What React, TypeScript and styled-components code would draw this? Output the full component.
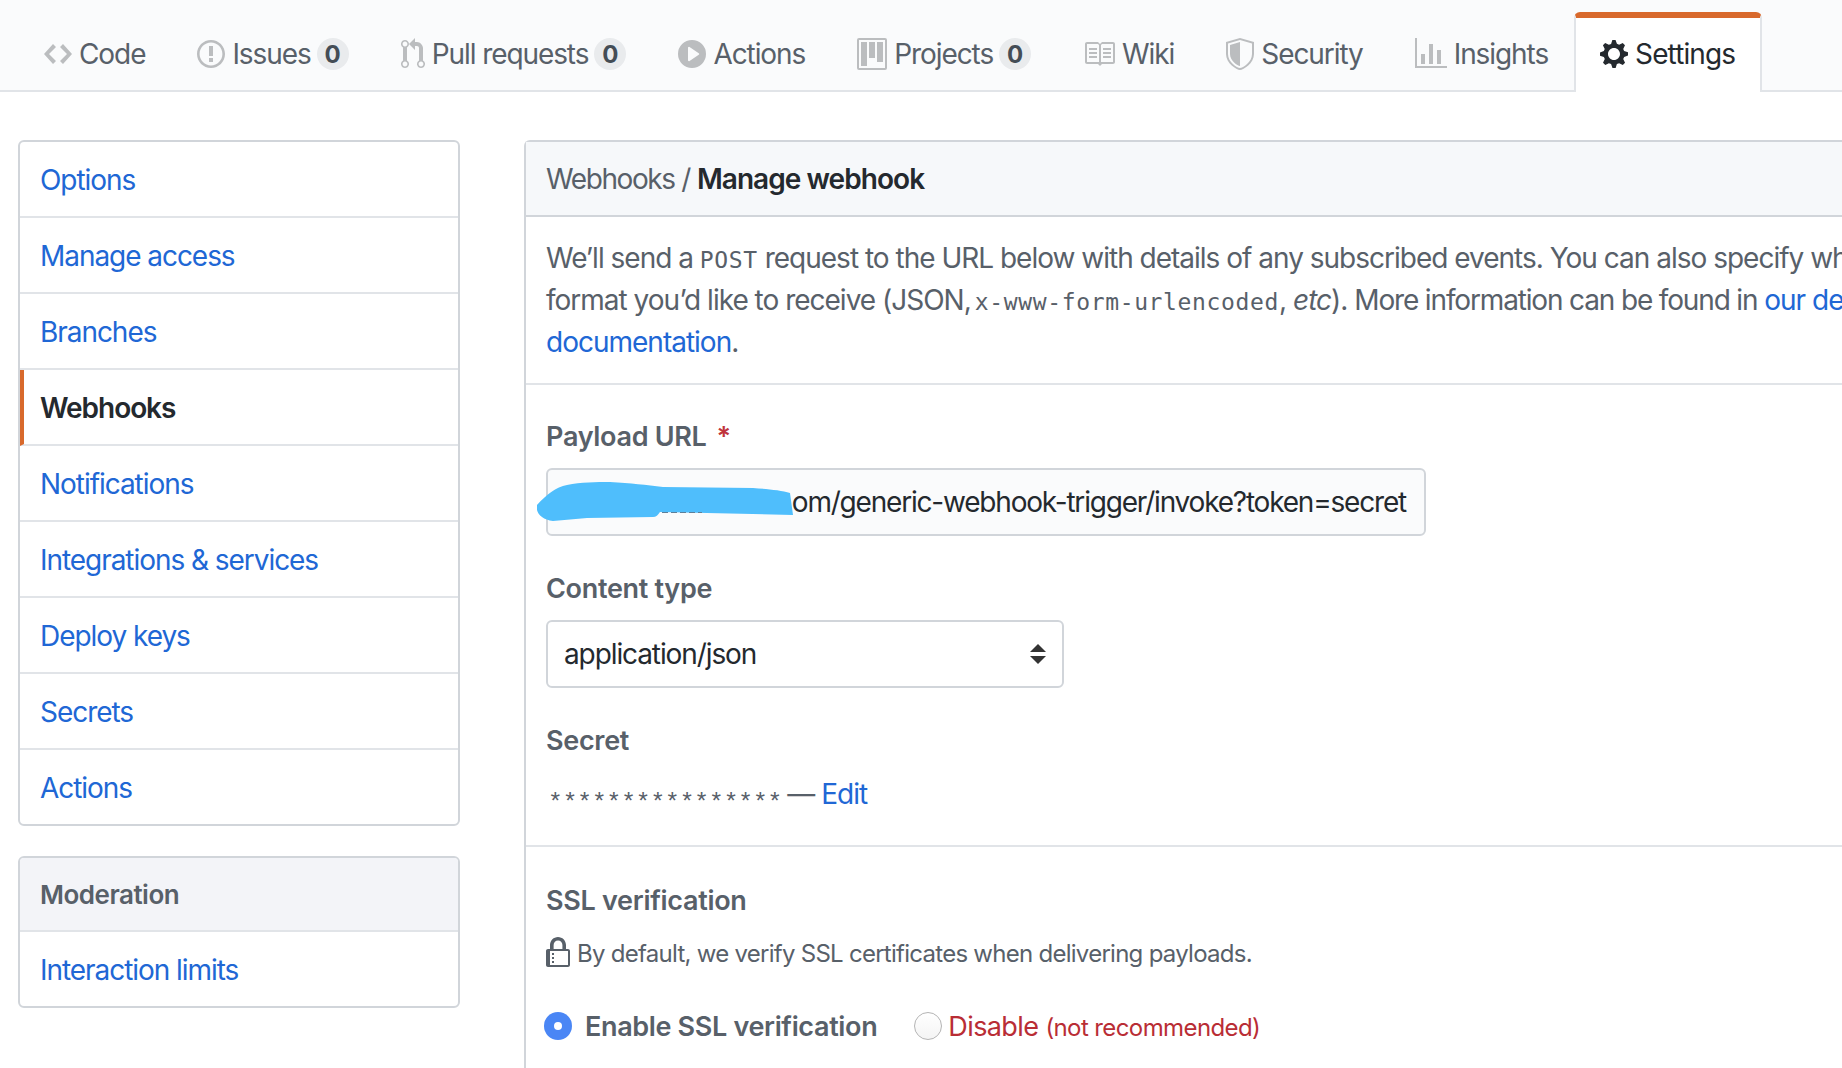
import React from 'react';
import styled, { createGlobalStyle } from 'styled-components';

const GlobalStyle = createGlobalStyle`
  html, body { margin: 0; padding: 0; background: #fff; overflow: hidden; }
  body { font-family: Inter, "Liberation Sans", sans-serif; color: #24292e; }
  * { box-sizing: border-box; }
`;

const Page = styled.div`
  width: 1842px;
  height: 1068px;
  overflow: hidden;
  display: flex;
  flex-direction: column;
`;

const TabBar = styled.nav`
  height: 92px;
  flex: none;
  display: flex;
  align-items: flex-end;
  padding-left: 18px;
  background: #fafbfc;
  border-bottom: 2px solid #e1e4e8;
`;

const Tab = styled.a<{ $active?: boolean }>`
  height: ${p => (p.$active ? '80px' : '78px')};
  margin-bottom: ${p => (p.$active ? '-2px' : '0')};
  display: flex;
  align-items: center;
  gap: 7px;
  padding: 0 ${p => (p.$active ? '25px' : '24px')} ${p => (p.$active ? '2px' : '0')} 24px;
  font-size: 28px;
  letter-spacing: ${p => (p.$active ? '-0.9px' : '-1.08px')};
  white-space: nowrap;
  color: ${p => (p.$active ? '#24292e' : '#586069')};
  background: ${p => (p.$active ? '#fff' : 'transparent')};
  border-left: 2px solid ${p => (p.$active ? '#e1e4e8' : 'transparent')};
  border-right: 2px solid ${p => (p.$active ? '#e1e4e8' : 'transparent')};
  border-top: 6px solid ${p => (p.$active ? '#d8692c' : 'transparent')};
  border-radius: ${p => (p.$active ? '6px 6px 0 0' : '0')};
`;

const TabIcon = styled.svg<{ $active?: boolean }>`
  height: 32px;
  flex: none;
  fill: ${p => (p.$active ? '#24292e' : '#bbbdbf')};
`;

const Badge = styled.span`
  width: 32px;
  height: 32px;
  margin-left: -1px;
  border-radius: 16px;
  background: #e9ebed;
  color: #444d56;
  font-size: 24px;
  font-weight: 700;
  letter-spacing: 0;
  display: flex;
  align-items: center;
  justify-content: center;
`;

const Content = styled.div`
  flex: 1;
  display: flex;
  align-items: flex-start;
  gap: 64px;
  padding: 48px 0 0 18px;
  overflow: hidden;
`;

const Sidebar = styled.aside`
  width: 442px;
  flex: none;
  display: flex;
  flex-direction: column;
  gap: 30px;
`;

const Menu = styled.div`
  border: 2px solid #d1d5da;
  border-radius: 6px;
  overflow: hidden;
  background: #fff;
`;

const MenuItem = styled.a<{ $active?: boolean }>`
  height: 76px;
  display: flex;
  align-items: center;
  padding-left: ${p => (p.$active ? '16px' : '20px')};
  padding-top: 2px;
  font-size: 28px;
  letter-spacing: -1.05px;
  color: ${p => (p.$active ? '#24292e' : '#2067d5')};
  font-weight: ${p => (p.$active ? 600 : 400)};
  border-left: ${p => (p.$active ? '4px solid #d8692c' : '0')};
  border-bottom: 2px solid #e1e4e8;
  &:last-child { border-bottom: 0; height: 74px; }
`;

const MenuHeading = styled.div`
  height: 74px;
  display: flex;
  align-items: center;
  padding-left: 20px;
  font-size: 26px;
  font-weight: 600;
  letter-spacing: -0.5px;
  color: #586069;
  background: #f3f4f8;
  border-bottom: 2px solid #e1e4e8;
`;

const Panel = styled.main`
  width: 1500px;
  flex: none;
  border: 2px solid #d1d5da;
  border-right: 0;
  border-bottom: 0;
  border-radius: 6px 0 0 0;
  min-height: 930px;
`;

const PanelHeader = styled.header`
  height: 75px;
  display: flex;
  align-items: center;
  gap: 7px;
  padding-left: 20px;
  font-size: 28px;
  letter-spacing: -1.4px;
  color: #586069;
  background: #f6f8fa;
  border-bottom: 2px solid #d1d5da;
`;

const Crumb = styled.strong`
  font-weight: 600;
  letter-spacing: -0.95px;
  color: #24292e;
`;

const Intro = styled.section`
  padding: 20px 0 20px 20px;
  font-size: 28px;
  line-height: 42px;
  letter-spacing: -1px;
  color: #586069;
  white-space: nowrap;
  border-bottom: 2px solid #e1e4e8;
`;

const Code = styled.code`
  font-family: "DejaVu Sans Mono", "Liberation Mono", monospace;
  font-size: 23px;
  line-height: 1;
  letter-spacing: 0.65px;
`;

const CodeTucked = styled(Code)`
  margin-left: -3px;
`;

const Tight = styled.span`
  letter-spacing: -1.15px;
`;

const Link = styled.a`
  color: #2067d5;
`;

const FormBlock = styled.section`
  padding: 33px 0 30px 20px;
  border-bottom: 2px solid #e1e4e8;
`;

const Label = styled.label`
  display: block;
  height: 36px;
  line-height: 38px;
  margin-bottom: 14px;
  font-size: 27px;
  font-weight: 600;
  letter-spacing: -0.3px;
  color: #586069;
`;

const Required = styled.span`
  margin-left: 10px;
  color: #c0343c;
`;

const TextField = styled.div`
  position: relative;
  width: 880px;
  height: 68px;
  margin-bottom: 34px;
  padding-right: 18px;
  display: flex;
  align-items: center;
  justify-content: flex-end;
  font-size: 28px;
  letter-spacing: -1.2px;
  color: #24292e;
  background: #fafbfc;
  border: 2px solid #d1d5da;
  border-radius: 6px;
  white-space: nowrap;
`;

const Scribble = styled.svg`
  position: absolute;
  left: -12px;
  top: 12px;
  width: 257px;
  height: 40px;
`;

const SelectField = styled.div`
  width: 518px;
  height: 68px;
  margin-bottom: 34px;
  padding: 0 16px;
  display: flex;
  align-items: center;
  justify-content: space-between;
  font-size: 28px;
  letter-spacing: -1.1px;
  background: #fff;
  border: 2px solid #d1d5da;
  border-radius: 6px;
`;

const SecretRow = styled.div`
  margin-top: 15px;
  height: 42px;
  display: flex;
  align-items: center;
  font-size: 28px;
  letter-spacing: -0.95px;
  color: #586069;
  white-space: pre;
`;

const Stars = styled.span`
  font-family: "Liberation Mono", monospace;
  font-size: 24.4px;
  letter-spacing: 0;
  margin: 19px 5px 0 2px;
`;

const SslBlock = styled.section`
  padding: 35px 0 0 20px;
`;

const Note = styled.p`
  margin: 17px 0 0;
  height: 36px;
  display: flex;
  align-items: center;
  gap: 7px;
  font-size: 24px;
  letter-spacing: -0.73px;
  color: #586069;
  white-space: nowrap;
`;

const Choices = styled.div`
  margin: 37px 0 0 -2px;
  height: 36px;
  display: flex;
  align-items: center;
`;

const Radio = styled.span<{ $on?: boolean }>`
  width: 28px;
  height: 28px;
  flex: none;
  border-radius: 50%;
  display: flex;
  align-items: center;
  justify-content: center;
  background: ${p => (p.$on ? '#4a86f5' : 'linear-gradient(#fff, #f4f4f4)')};
  border: ${p => (p.$on ? '0' : '1.5px solid #b4b4b4')};
  &::after {
    content: '';
    display: ${p => (p.$on ? 'block' : 'none')};
    width: 8px;
    height: 8px;
    border-radius: 50%;
    background: #fff;
  }
`;

const ChoiceText = styled.span<{ $danger?: boolean }>`
  font-size: 27px;
  font-weight: ${p => (p.$danger ? 400 : 600)};
  letter-spacing: ${p => (p.$danger ? '-0.6px' : '-0.35px')};
  color: ${p => (p.$danger ? '#b92d35' : '#586069')};
  margin: ${p => (p.$danger ? '0 0 0 6px' : '0 37px 0 13px')};
  white-space: nowrap;
`;

const Small = styled.span`
  font-size: 24px;
  letter-spacing: -0.6px;
  margin-left: 7px;
`;

const paths = {
  code: 'M9.5 3L8 4.5 11.5 8 8 11.5 9.5 13 14 8 9.5 3zm-5 0L0 8l4.5 5L6 11.5 2.5 8 6 4.5 4.5 3z',
  issue: 'M7 2.3c3.14 0 5.7 2.56 5.7 5.7s-2.56 5.7-5.7 5.7A5.71 5.71 0 0 1 1.3 8c0-3.14 2.56-5.7 5.7-5.7zM7 1C3.14 1 0 4.14 0 8s3.14 7 7 7 7-3.14 7-7-3.14-7-7-7zm1 3H6v5h2V4zm0 6H6v2h2v-2z',
  pull: 'M11 11.28V5c-.03-.78-.34-1.47-.94-2.06C9.46 2.35 8.78 2.03 8 2H7V0L4 3l3 3V4h1c.27.02.48.11.69.31.21.2.3.42.31.69v6.28A1.993 1.993 0 0 0 10 15a1.993 1.993 0 0 0 1-3.72zm-1 2.92c-.66 0-1.2-.55-1.2-1.2 0-.65.55-1.2 1.2-1.2.65 0 1.2.55 1.2 1.2 0 .65-.55 1.2-1.2 1.2zM4 3c0-1.11-.89-2-2-2a1.993 1.993 0 0 0-1 3.72v6.56A1.993 1.993 0 0 0 2 15a1.993 1.993 0 0 0 1-3.72V4.72c.59-.34 1-.98 1-1.72zm-.8 10c0 .66-.55 1.2-1.2 1.2-.65 0-1.2-.55-1.2-1.2 0-.65.55-1.2 1.2-1.2.65 0 1.2.55 1.2 1.2zM2 4.2C1.34 4.2.8 3.65.8 3c0-.65.55-1.2 1.2-1.2.65 0 1.2.55 1.2 1.2 0 .65-.55 1.2-1.2 1.2z',
  play: 'M14 8A7 7 0 1 1 0 8a7 7 0 0 1 14 0zm-8.223 3.482l4.599-3.066a.5.5 0 0 0 0-.832L5.777 4.518A.5.5 0 0 0 5 4.934v6.132a.5.5 0 0 0 .777.416z',
  project: 'M10 12h3V2h-3v10zm-4-2h3V2H6v8zm-4 4h3V2H2v12zm-1 1h13V1H1v14zM14 0H1a1 1 0 0 0-1 1v14a1 1 0 0 0 1 1h13a1 1 0 0 0 1-1V1a1 1 0 0 0-1-1z',
  book: 'M3 5h4v1H3V5zm0 3h4V7H3v1zm0 2h4V9H3v1zm11-5h-4v1h4V5zm0 2h-4v1h4V7zm0 2h-4v1h4V9zm2-6v9c0 .55-.45 1-1 1H9.5l-1 1-1-1H2c-.55 0-1-.45-1-1V3c0-.55.45-1 1-1h5.5l1 1 1-1H15c.55 0 1 .45 1 1zm-8 .5L7.5 3H2v9h6V3.5zm7-.5H9.5l-.5.5V12h6V3z',
  shield: 'M0 2l7-2 7 2v6.02C14 12.69 8.69 16 7 16c-1.69 0-7-3.31-7-7.98V2zm1 .75L7 1l6 1.75v5.268C13 12.104 8.449 15 7 15c-1.449 0-6-2.896-6-6.982V2.75zm1 .75L7 2v12c-1.207 0-5-2.482-5-5.985V3.5z',
  graph: 'M16 14v1H0V0h1v14h15zM5 13H3V8h2v5zm4 0H7V3h2v10zm4 0h-2V6h2v7z',
  gear: 'M14 8.77v-1.6l-1.94-.64-.45-1.09.88-1.84-1.13-1.13-1.81.91-1.09-.45-.69-1.92h-1.6l-.63 1.94-1.11.45-1.84-.88-1.13 1.13.91 1.81-.45 1.09L0 7.23v1.59l1.94.64.45 1.09-.88 1.84 1.13 1.13 1.81-.91 1.09.45.69 1.92h1.59l.63-1.94 1.11-.45 1.84.88 1.13-1.13-.92-1.81.47-1.09L14 8.75v.02zM7 11c-1.66 0-3-1.34-3-3s1.34-3 3-3 3 1.34 3 3-1.34 3-3 3z',
  lock: 'M4 13H3v-1h1v1zm8-6v7c0 .55-.45 1-1 1H1c-.55 0-1-.45-1-1V7c0-.55.45-1 1-1h1V4c0-2.2 1.8-4 4-4s4 1.8 4 4v2h1c.55 0 1 .45 1 1zM3.8 6h4.41V4c0-1.22-.98-2.2-2.2-2.2-1.22 0-2.2.98-2.2 2.2v2H3.8zM11 7H2v7h9V7zM4 8H3v1h1V8zm0 2H3v1h1v-1z',
};

const tabs = [
  { label: 'Code', path: paths.code, vb: 14 },
  { label: 'Issues', path: paths.issue, vb: 14, badge: '0' },
  { label: 'Pull requests', path: paths.pull, vb: 12, badge: '0' },
  { label: 'Actions', path: paths.play, vb: 14 },
  { label: 'Projects', path: paths.project, vb: 15, badge: '0' },
  { label: 'Wiki', path: paths.book, vb: 16 },
  { label: 'Security', path: paths.shield, vb: 14 },
  { label: 'Insights', path: paths.graph, vb: 16 },
  { label: 'Settings', path: paths.gear, vb: 14, active: true },
];

const menu = ['Options', 'Manage access', 'Branches', 'Webhooks', 'Notifications', 'Integrations & services', 'Deploy keys', 'Secrets', 'Actions'];

const LockIcon = styled.svg`
  width: 24px;
  height: 32px;
  flex: none;
  fill: #586069;
`;

const SelectArrows = styled.svg`
  width: 16px;
  height: 20px;
  flex: none;
  fill: #333;
`;

export default function App() {
  return (
    <Page>
      <GlobalStyle />
      <TabBar>
        {tabs.map(t => (
          <Tab key={t.label} $active={t.active}>
            <TabIcon $active={t.active} viewBox={`0 0 ${t.vb} 16`} width={t.vb * 2} fillRule="evenodd">
              <path d={t.path} />
            </TabIcon>
            {t.label}
            {t.badge && <Badge>{t.badge}</Badge>}
          </Tab>
        ))}
      </TabBar>
      <Content>
        <Sidebar>
          <Menu>
            {menu.map(m => (
              <MenuItem key={m} $active={m === 'Webhooks'}>{m}</MenuItem>
            ))}
          </Menu>
          <Menu>
            <MenuHeading>Moderation</MenuHeading>
            <MenuItem>Interaction limits</MenuItem>
          </Menu>
        </Sidebar>
        <Panel>
          <PanelHeader>
            Webhooks / <Crumb>Manage webhook</Crumb>
          </PanelHeader>
          <Intro>
            We’ll send a <Code>POST</Code> request to the URL below with details of any subscribed events. You can also specify which data
            <br />
            format you’d like to receive (JSON, <CodeTucked>x-www-form-urlencoded</CodeTucked>, <em>etc</em>). <Tight>More information can be found in</Tight> <Link>our developer</Link>
            <br />
            <Link>documentation</Link>.
          </Intro>
          <FormBlock>
            <Label>Payload URL<Required>*</Required></Label>
            <TextField>
              om/generic-webhook-trigger/invoke?token=secret
              <Scribble viewBox="0 0 257 40">
                <path
                  fill="#4fbefc"
                  d="M1 23C10 13 20 5 31 3C45 0 60 0 74 0C95 1 110 3 127 5L217 6C230 7 245 8 254 11L257 33L171 31L124 30C122 33 120 35 117 35L51 36L17 39C8 38 2 33 1 28Z"
                />
                <path stroke="#5d7f99" strokeWidth="1" strokeDasharray="6 3" fill="none" d="M126 30.5H166" />
              </Scribble>
            </TextField>
            <Label>Content type</Label>
            <SelectField>
              application/json
              <SelectArrows viewBox="0 0 16 20">
                <path d="M8 0L16 8H0ZM0 12H16L8 20Z" />
              </SelectArrows>
            </SelectField>
            <Label>Secret</Label>
            <SecretRow>
              <Stars>****************</Stars>— <Link>Edit</Link>
            </SecretRow>
          </FormBlock>
          <SslBlock>
            <Label>SSL verification</Label>
            <Note>
              <LockIcon viewBox="0 0 12 16" fillRule="evenodd"><path d={paths.lock} /></LockIcon>
              By default, we verify SSL certificates when delivering payloads.
            </Note>
            <Choices>
              <Radio $on />
              <ChoiceText>Enable SSL verification</ChoiceText>
              <Radio />
              <ChoiceText $danger>Disable<Small>(not recommended)</Small></ChoiceText>
            </Choices>
          </SslBlock>
        </Panel>
      </Content>
    </Page>
  );
}
